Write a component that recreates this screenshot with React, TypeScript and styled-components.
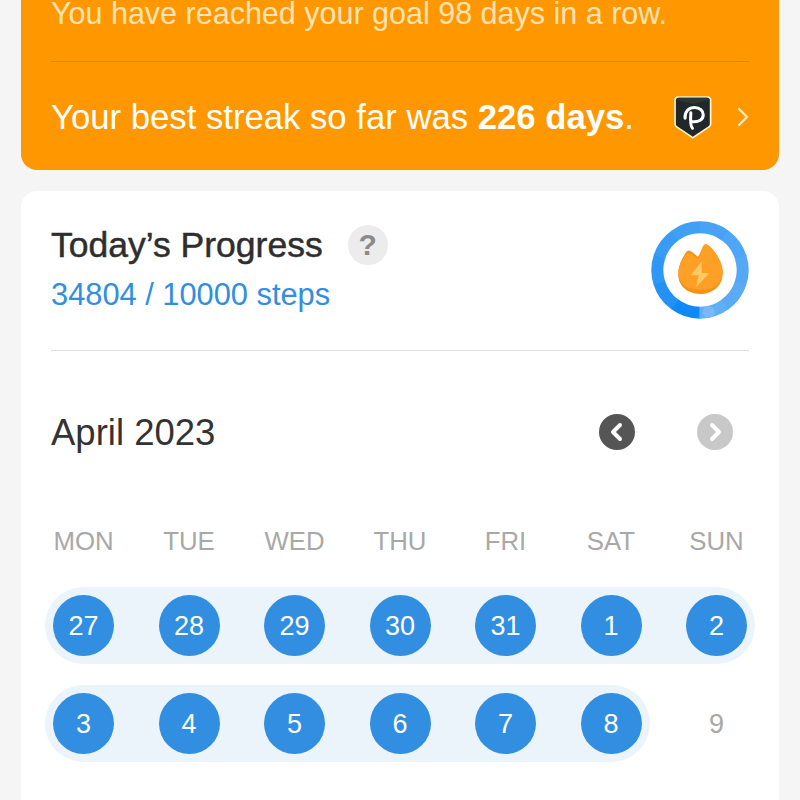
import React from "react";
import styled, { createGlobalStyle } from "styled-components";

const GlobalStyle = createGlobalStyle`
  html, body {
    margin: 0;
    padding: 0;
    background: #f5f5f6;
    font-family: "Liberation Sans", Arial, sans-serif;
  }
`;

const Page = styled.div`
  width: 800px;
  height: 800px;
  overflow: hidden;
  box-sizing: border-box;
  padding: 0 21px;
  display: flex;
  flex-direction: column;
  gap: 21px;
`;

const StreakCard = styled.section`
  flex: none;
  height: 170px;
  box-sizing: border-box;
  padding: 0 30px;
  background: #ff9800;
  border-radius: 0 0 16px 16px;
`;

const GoalText = styled.p`
  margin: 0 0 35px;
  height: 26px;
  line-height: 26px;
  font-size: 30.5px;
  color: #ffe3b5;
  white-space: nowrap;
`;

const BestRow = styled.div`
  border-top: 1px solid #e08212;
  height: 109px;
  box-sizing: border-box;
  padding-top: 2px;
  display: flex;
  align-items: center;
`;

const BestText = styled.p`
  margin: 0;
  flex: 1;
  font-size: 34.7px;
  color: #fff;
  white-space: nowrap;
  b {
    font-weight: 700;
  }
`;

const Chevron = styled.svg`
  margin-left: 25px;
`;

const ProgressCard = styled.section`
  flex: 1;
  box-sizing: border-box;
  padding: 30px 30px 0;
  background: #fff;
  border-radius: 16px 16px 0 0;
`;

const ProgressHead = styled.div`
  height: 129px;
  border-bottom: 1px solid #dfdfdf;
  display: flex;
  justify-content: space-between;
`;

const TitleLine = styled.div`
  display: flex;
  align-items: center;
  gap: 25px;
  height: 48px;
`;

const Title = styled.h2`
  margin: 0;
  font-size: 35.5px;
  font-weight: 400;
  -webkit-text-stroke: 0.5px #2e2e2e;
  color: #2e2e2e;
`;

const HelpButton = styled.span`
  width: 40px;
  height: 40px;
  border-radius: 50%;
  background: #ececec;
  color: #8a8a8a;
  font-size: 30px;
  font-weight: 700;
  display: flex;
  align-items: center;
  justify-content: center;
`;

const Steps = styled.div`
  margin-top: 8px;
  font-size: 30.8px;
  color: #328ee0;
`;

const MonthRow = styled.div`
  height: 162px;
  display: flex;
  align-items: flex-start;
  justify-content: space-between;
  padding-top: 59px;
  box-sizing: border-box;
`;

const MonthName = styled.h3`
  margin: 0;
  font-size: 36.5px;
  line-height: 46px;
  font-weight: 400;
  color: #333;
`;

const MonthNav = styled.div`
  display: flex;
  gap: 61.5px;
  margin: 4px 16.5px 0 0;
`;

const NavButton = styled.span<{ $off?: boolean }>`
  width: 36px;
  height: 36px;
  border-radius: 50%;
  background: ${(props) => (props.$off ? "#c8c8c8" : "#555")};
  display: flex;
  align-items: center;
  justify-content: center;
`;

const Weekdays = styled.div`
  display: flex;
  justify-content: space-between;
  box-sizing: border-box;
  margin: 0 -6px;
  height: 74px;
  padding: 13px 8px 0;
`;

const Weekday = styled.span`
  width: 61px;
  text-align: center;
  font-size: 25.8px;
  line-height: 30px;
  color: #a8a8a8;
`;

const Week = styled.div`
  display: flex;
  justify-content: space-between;
  margin: 0 -6px 21px;
  padding-right: 8px;
`;

const Strip = styled.div`
  display: flex;
  gap: 44.5px;
  padding: 8px;
  background: #ebf3fb;
  border-radius: 39px;
`;

const FullStrip = styled(Strip)`
  flex: 1;
  margin-right: -8px;
`;

const Day = styled.span<{ $done?: boolean }>`
  width: 61px;
  height: 61px;
  box-sizing: border-box;
  padding-top: 2px;
  margin: ${(props) => (props.$done ? 0 : "8px 0")};
  border-radius: 50%;
  background: ${(props) => (props.$done ? "#328ee0" : "transparent")};
  color: ${(props) => (props.$done ? "#fff" : "#a8a8a8")};
  font-size: 27px;
  display: flex;
  align-items: center;
  justify-content: center;
`;

const RingBox = styled.svg`
  flex: none;
  display: block;
`;

const ringColors = ["#0f89f5", "#2391f6", "#2f98f7", "#389cf6", "#40a0f6", "#48a3f6", "#4fa6f6", "#55a8f6", "#5aabf6", "#5faef6"];

const ProgressRing = () => {
  // bottom, going round clockwise, each arc a bit lighter
  const cx = 210;
  const cy = 196;
  const r = 128;
  const pts = ringColors.map((_, i) => {
    const a0 = (Math.PI / 180) * (180 + i * 36);
    const a1 = (Math.PI / 180) * (180 + (i + 1) * 36 + 1);
    return {
      x0: cx + r * Math.sin(a0),
      y0: cy - r * Math.cos(a0),
      x1: cx + r * Math.sin(a1),
      y1: cy - r * Math.cos(a1),
    };
  });
  return (
    <RingBox width="98" height="98" viewBox="63 49 294 294">
      {pts.map((p, i) => (
        <path
          key={i}
          d={`M${p.x0} ${p.y0} A${r} ${r} 0 0 1 ${p.x1} ${p.y1}`}
          fill="none"
          stroke={ringColors[i]}
          strokeWidth="36"
        />
      ))}
      <circle cx="236" cy="322" r="18" fill="#7ab8f8" />
      <path
        d="M178 138C172 136 165 148 165 148C150 170 145 190 145 212C145 245 175 268 210 268C248 268 278 245 278 205C278 170 250 130 232 120C225 116 220 122 217 130C214 140 208 150 204 156C196 152 188 140 178 138Z"
        fill="#f09318"
      />
      <path
        d="M178 146C172 144 165 154 165 154C150 174 145 190 145 206C145 238 175 256 210 256C248 256 278 238 278 200C278 170 250 132 232 120C225 116 220 122 217 130C214 140 208 156 204 162C196 158 188 148 178 146Z"
        fill="#ff9f25"
      />
      <path d="M215 170L182 212L206 212L198 248L238 205L215 205Z" fill="#ffc963" />
    </RingBox>
  );
};

const Badge = () => (
  <svg width="38" height="43" viewBox="105 50 113 128">
    <path
      d="M118 53H204C210 53 214 57 214 63V134C214 138 212 140 209 142L161 174L113 142C110 140 108 138 108 134V63C108 57 112 53 118 53Z"
      fill="#21282a"
      stroke="#fff3c8"
      strokeWidth="5"
    />
    <path d="M110 62L161 74L212 62L204 55H118Z" fill="#2f3436" />
    <path
      d="M160 146C154 140 153 128 155 100M138 116C136 96 150 84 166 84C182 84 192 94 192 106C192 120 180 128 158 126"
      fill="none"
      stroke="#fff"
      strokeWidth="9"
      strokeLinecap="round"
    />
  </svg>
);

const weekdays = ["MON", "TUE", "WED", "THU", "FRI", "SAT", "SUN"];
const firstWeek = [27, 28, 29, 30, 31, 1, 2];
const secondWeek = [3, 4, 5, 6, 7, 8];

const App = () => {
  return (
    <Page>
      <GlobalStyle />
      <StreakCard>
        <GoalText>You have reached your goal 98 days in a row.</GoalText>
        <BestRow>
          <BestText>
            Your best streak so far was <b>226 days</b>.
          </BestText>
          <Badge />
          <Chevron width="12" height="20" viewBox="0 0 12 20">
            <path d="M2 2L10 10L2 18" fill="none" stroke="#ffe9c4" strokeWidth="2.4" strokeLinecap="round" strokeLinejoin="round" />
          </Chevron>
        </BestRow>
      </StreakCard>
      <ProgressCard>
        <ProgressHead>
          <div>
            <TitleLine>
              <Title>Today’s Progress</Title>
              <HelpButton>?</HelpButton>
            </TitleLine>
            <Steps>34804 / 10000 steps</Steps>
          </div>
          <ProgressRing />
        </ProgressHead>
        <MonthRow>
          <MonthName>April 2023</MonthName>
          <MonthNav>
            <NavButton>
              <svg width="16" height="20" viewBox="0 0 16 20">
                <path d="M11 3L4 10L11 17" fill="none" stroke="#fff" strokeWidth="4" strokeLinecap="round" strokeLinejoin="round" />
              </svg>
            </NavButton>
            <NavButton $off>
              <svg width="16" height="20" viewBox="0 0 16 20">
                <path d="M5 3L12 10L5 17" fill="none" stroke="#fff" strokeWidth="4" strokeLinecap="round" strokeLinejoin="round" />
              </svg>
            </NavButton>
          </MonthNav>
        </MonthRow>
        <Weekdays>
          {weekdays.map((d) => (
            <Weekday key={d}>{d}</Weekday>
          ))}
        </Weekdays>
        <Week>
          <FullStrip>
            {firstWeek.map((d) => (
              <Day key={d} $done>{d}</Day>
            ))}
          </FullStrip>
        </Week>
        <Week>
          <Strip>
            {secondWeek.map((d) => (
              <Day key={d} $done>{d}</Day>
            ))}
          </Strip>
          <Day>9</Day>
        </Week>
      </ProgressCard>
    </Page>
  );
};

export default App;
